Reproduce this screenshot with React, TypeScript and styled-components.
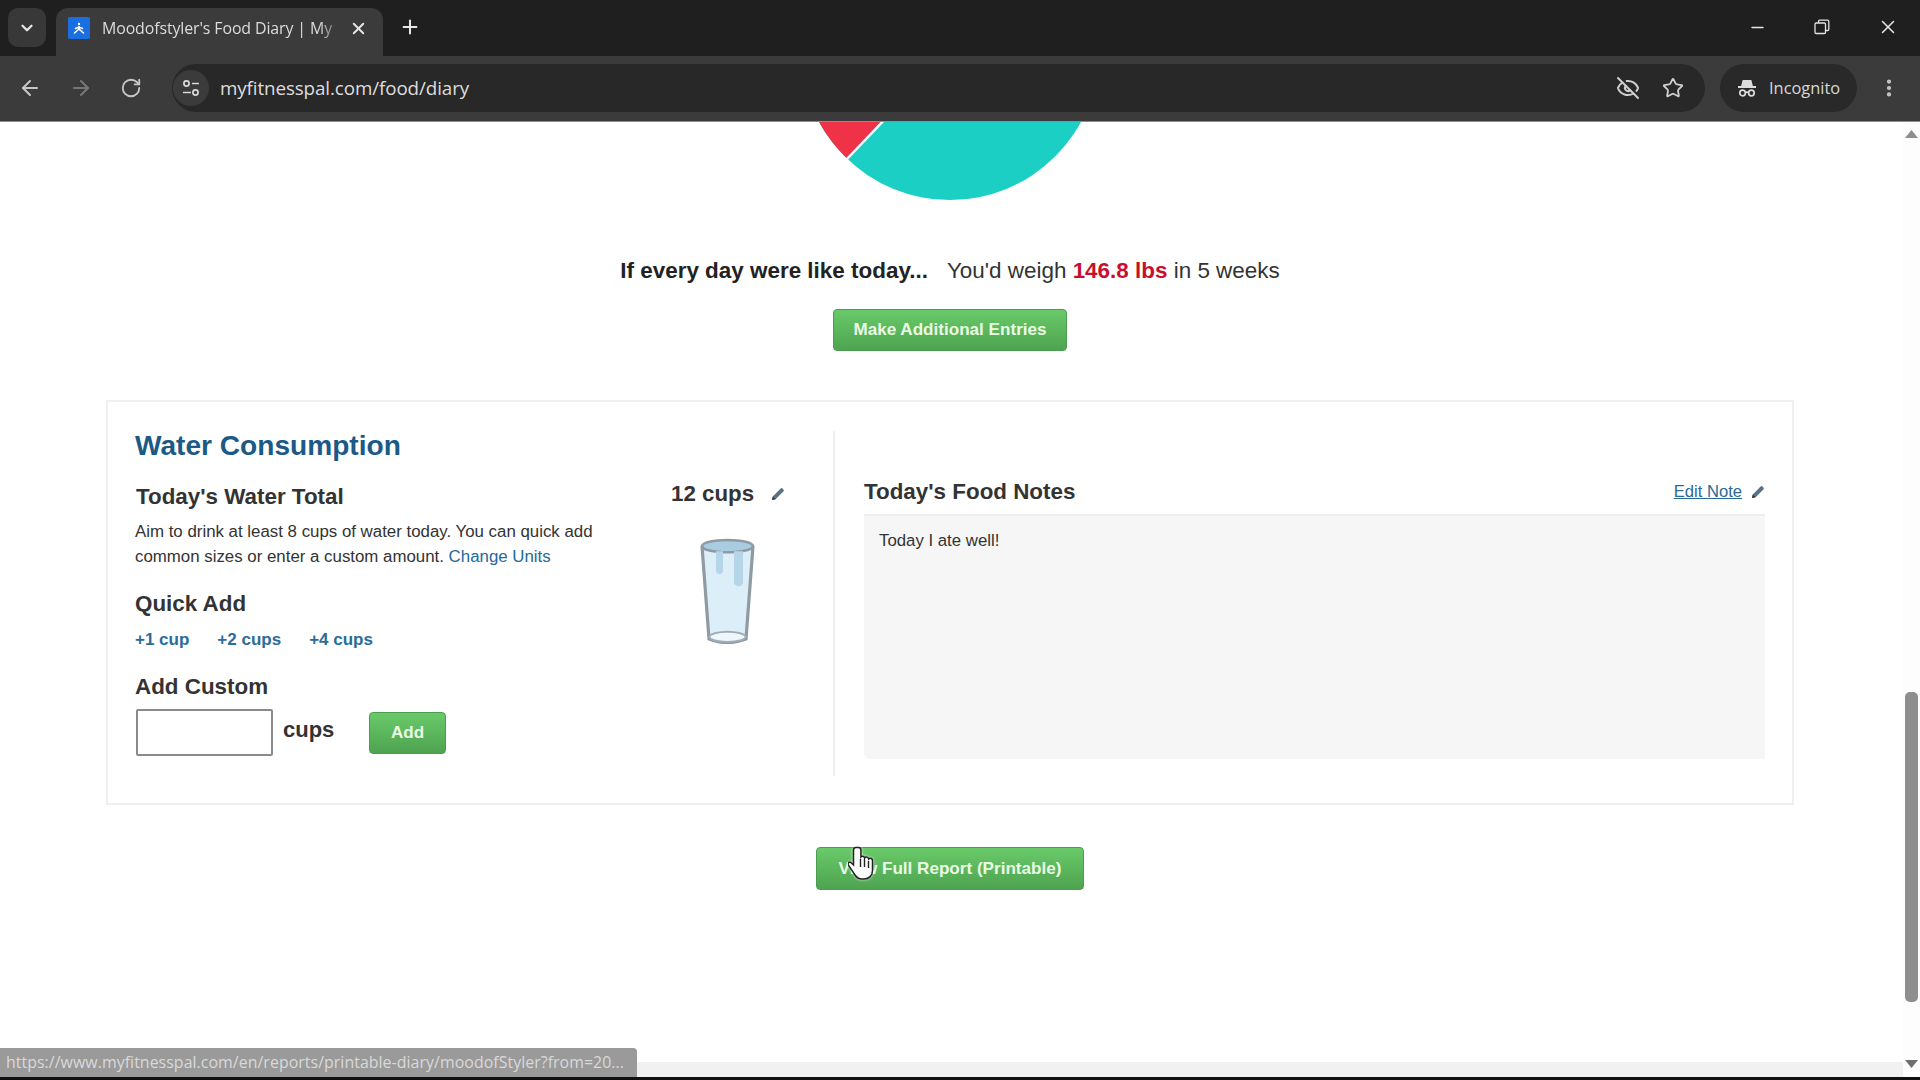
import React from "react";
import styled, { createGlobalStyle } from "styled-components";
import { ArrowLeft, ArrowRight, ChevronDown, EyeOff, Minus, MoreVertical, Plus, RotateCw, Star, X } from "lucide-react";

const Global = createGlobalStyle`
  html, body { margin: 0; padding: 0; background: #fff; overflow: hidden; }
  * { box-sizing: border-box; }
`;

const Screen = styled.div`
  position: relative; width: 1920px; height: 1080px; display: flex; flex-direction: column;
  background: #fff; overflow: hidden; font-family: "Liberation Sans", Arial, sans-serif;
`;
const TabStrip = styled.div`
  height: 56px; flex: none; background: #1f1f1f; display: flex; align-items: flex-start; padding: 8px 0 0 8px; color: #e3e3e3;
`;
const TabMenu = styled.div`
  width: 38px; height: 39px; border-radius: 10px; background: #383838; display: flex; align-items: center; justify-content: center; color: #e8e8e8;
`;
const Tab = styled.div`
  width: 327px; height: 48px; margin-left: 10px; background: #3b3b3b; border-radius: 12px 12px 0 0;
  display: flex; align-items: center; padding: 0 15px 8px 12px;
`;
const Favicon = styled.div`
  width: 22px; height: 22px; border-radius: 2px; background: #1a6fe0; flex: none; display: flex; align-items: center; justify-content: center;
`;
const TabTitle = styled.div`
  flex: 1; margin: 0 6px 0 12px; font-family: "Open Sans", sans-serif; font-size: 15.9px; white-space: nowrap; color: #dcdcdc; letter-spacing: -0.1px;
  -webkit-mask-image: linear-gradient(to right, #000 90%, transparent 100%);
  mask-image: linear-gradient(to right, #000 90%, transparent 100%);
`;
const NewTab = styled.div`
  margin-left: 16px; height: 32px; margin-top: 3px; display: flex; align-items: center; color: #e8e8e8;
`;
const WindowControls = styled.div`
  margin-left: auto; display: flex; align-items: center; height: 38px; padding-right: 21px; gap: 47px; color: #e8e8e8;
`;
const Toolbar = styled.div`
  height: 66px; flex: none; background: #3b3b3b; border-bottom: 1px solid #8e8e8e; display: flex; align-items: center; padding: 0 0 2px 18px; color: #c7c7c7;
`;
const NavGroup = styled.div`
  display: flex; align-items: center; gap: 27px; width: 154px; flex: none;
`;
const Omnibox = styled.div`
  width: 1533px; height: 48px; border-radius: 24px; background: #282828; display: flex; align-items: center; padding-left: 1px; color: #d0d0d0;
`;
const SiteButton = styled.div`
  width: 36px; height: 36px; border-radius: 50%; background: #3b3b3b; display: flex; align-items: center; justify-content: center; flex: none;
`;
const Url = styled.div`
  margin-left: 11px; font-family: "Open Sans", sans-serif; font-size: 18.8px; color: #dedede; letter-spacing: -0.1px;
`;
const OmniIcons = styled.div`
  margin-left: auto; display: flex; align-items: center; gap: 22px; padding-right: 21px;
`;
const IncognitoPill = styled.div`
  width: 137px; height: 48px; margin-left: 15px; border-radius: 24px; background: #292929; display: flex; align-items: center; padding-left: 17px; gap: 12px;
  font-family: "Open Sans", sans-serif; font-size: 16.4px; color: #d8d8d8;
`;
const Menu = styled.div`
  margin-left: 21px; display: flex; color: #c7c7c7;
`;
const Body = styled.div`
  flex: 1; min-height: 0; display: flex; background: #fff;
`;
const LeftPane = styled.div`
  flex: 1; min-width: 0; display: flex; flex-direction: column;
`;
const Page = styled.div`
  flex: 1; min-height: 0; overflow: hidden; padding-left: 106px;
`;
const Container = styled.div`
  width: 1688px; display: flex; flex-direction: column; align-items: center;
`;
const PieChart = styled.svg`
  display: block; width: 300px; height: 78px; flex: none;
`;
const Forecast = styled.div`
  margin-top: 58px; height: 26px; line-height: 26px; font-size: 22.45px; color: #333; white-space: nowrap;
`;
const ForecastLead = styled.strong`
  color: #222; margin-right: 19px;
`;
const Loss = styled.strong`
  color: #c8102e;
`;
const GreenButton = styled.div<{ $w: number; $h: number; $mt?: number }>`
  width: ${(p) => p.$w}px; height: ${(p) => p.$h}px; margin-top: ${(p) => p.$mt ?? 0}px; flex: none;
  display: flex; align-items: center; justify-content: center; border-radius: 4px; border: 1px solid #4c9c4e;
  background: linear-gradient(#69ca69, #4ea350); color: #e9fbe4; font-weight: 700; font-size: 17.1px; white-space: nowrap;
`;
const Card = styled.div`
  width: 100%; height: 405px; margin-top: 49px; flex: none; border: 2px solid #efefef; padding: 29px 27px 27px; display: flex;
`;
const WaterColumn = styled.div`
  width: 700px; flex: none; border-right: 2px solid #eeeeee; padding-right: 0;
`;
const WaterTitle = styled.h2`
  margin: 0; height: 32px; line-height: 30px; font-size: 28.1px; font-weight: 700; color: #1b5a86;
`;
const WaterRow = styled.div`
  display: flex; margin-top: 18px;
`;
const WaterForm = styled.div`
  width: 536px; flex: none; padding-top: 3px;
`;
const Heading = styled.h3<{ $mt?: number; $ml?: number }>`
  margin: ${(p) => p.$mt ?? 0}px 0 0 ${(p) => p.$ml ?? 0}px; height: 26px; line-height: 26px; font-size: 22.4px; font-weight: 700; color: #333;
`;
const Description = styled.p`
  margin: 9px 0 0; width: 490px; font-size: 16.85px; line-height: 25px; color: #333;
`;
const Link = styled.span`
  color: #23699a;
`;
const QuickLinks = styled.div`
  margin-top: 13px; height: 20px; line-height: 20px; display: flex; gap: 28px; font-size: 17px; font-weight: 700; color: #2b6c99;
`;
const CustomRow = styled.div`
  margin-top: 9px; display: flex; align-items: flex-start;
`;
const CupsInput = styled.div`
  width: 137px; height: 47px; margin-left: 1px; border: 2px solid #8a8a8a; border-radius: 2px; background: #fff; flex: none;
`;
const CupsLabel = styled.div`
  margin-left: 10px; width: 86px; line-height: 26px; margin-top: 8px; font-size: 22px; font-weight: 700; color: #333;
`;
const TotalColumn = styled.div`
  display: flex; flex-direction: column;
`;
const TotalValue = styled.div`
  height: 26px; line-height: 26px; display: flex; align-items: center; font-size: 22.3px; font-weight: 700; color: #333; gap: 17px;
`;
const Glass = styled.svg`
  display: block; width: 57px; height: 107px; margin: 31px 0 0 28px;
`;
const NotesColumn = styled.div`
  flex: 1; min-width: 0; padding: 48px 0 0 29px;
`;
const NotesHeader = styled.div`
  height: 35px; display: flex; justify-content: space-between; align-items: flex-start;
`;
const EditNote = styled.div`
  display: flex; align-items: center; height: 26px; gap: 9px; font-size: 16.6px; color: #2a6a94;
`;
const EditText = styled.span`
  text-decoration: underline;
`;
const NotesBox = styled.div`
  height: 245px; background: #f6f6f6; border-top: 2px solid #eeeeee; border-bottom-left-radius: 6px; padding: 15px 15px; font-size: 16.8px; line-height: 20px; color: #333;
`;
const VScroll = styled.div`
  width: 17px; flex: none; display: flex; flex-direction: column; align-items: center; padding-top: 8px; background: #fdfdfd;
`;
const ArrowShape = styled.svg<{ $mt?: number }>`
  display: block; width: 13px; height: 8px; margin-top: ${(p) => p.$mt ?? 0}px; flex: none;
`;
const Thumb = styled.div`
  width: 13px; height: 310px; margin-top: 554px; border-radius: 5px; background: #8e8e8e; flex: none;
`;
const HBar = styled.div`
  height: 15px; flex: none; background: #f1f1f1;
`;
const BottomEdge = styled.div`
  height: 3px; flex: none; background: #111;
`;
const StatusBubble = styled.div`
  position: absolute; left: 0; bottom: 3px; width: 637px; height: 29px; padding: 0 0 0 6px; background: #9a9a9a; border-top-right-radius: 4px;
  line-height: 29px; font-family: "Open Sans", sans-serif; font-size: 15.9px; color: #d9d9d9; white-space: nowrap; letter-spacing: 0.05px;
`;
const HandCursor = styled.svg`
  position: absolute; left: 848px; top: 845px; width: 26px; height: 36px; filter: drop-shadow(0 0 1.5px rgba(255,255,255,.8));
`;

const Pencil = ({ size = 14 }: { size?: number }) => (
  <svg width={size} height={size} viewBox="0 0 14 14">
    <path d="M1 13l.8-3.6L9.600 1.600a1.400 1.400 0 0 1 2 0l.8.8a1.400 1.400 0 0 1 0 2L4.600 12.200z" fill="#5a7186" />
    <path d="M1 13l.8-3.600 2.800 2.800z" fill="#30353a" />
  </svg>
);

const Incognito = () => (
  <svg width="20" height="20" viewBox="0 0 20 20" fill="none" stroke="#dcdcdc" strokeWidth="1.7">
    <path d="M5 8l1.300-5.200h7.400L15 8z" fill="#dcdcdc" />
    <path d="M1 9h18" strokeWidth="2" />
    <circle cx="5.600" cy="15" r="2.800" />
    <circle cx="14.400" cy="15" r="2.800" />
    <path d="M8.400 14.600c1-.6 2.200-.6 3.200 0" />
  </svg>
);

const Tune = () => (
  <svg width="20" height="20" viewBox="0 0 20 20" fill="none" stroke="#d8d8d8" strokeWidth="1.7">
    <circle cx="5.500" cy="5.500" r="2.600" />
    <path d="M11 5.500h7M2 14.500h8" />
    <circle cx="14.500" cy="14.500" r="2.600" />
  </svg>
);

const Restore = () => (
  <svg width="16" height="16" viewBox="0 0 16 16" fill="none" stroke="#e4e4e4" strokeWidth="1.3">
    <rect x="1" y="4" width="10.500" height="10.500" rx="1.200" />
    <path d="M4.500 4V2.400A1.200 1.200 0 0 1 5.700 1.200h7.900a1.200 1.200 0 0 1 1.200 1.200v7.900a1.200 1.200 0 0 1-1.200 1.200h-2" />
  </svg>
);

export default function App() {
  return (
    <Screen>
      <Global />
      <TabStrip>
        <TabMenu><ChevronDown size={18} strokeWidth={3} /></TabMenu>
        <Tab>
          <Favicon>
            <svg width="16" height="16" viewBox="0 0 16 16" fill="none" stroke="#fff" strokeWidth="1.600" strokeLinecap="round">
              <circle cx="8" cy="4" r="1.200" fill="#fff" stroke="none" />
              <path d="M8 6.500V9M8 9l-4.500 4M8 9l4.500 4M4.500 8.500L8 7l3.500 1.500" />
            </svg>
          </Favicon>
          <TabTitle>Moodofstyler's Food Diary | My</TabTitle>
          <X size={19} strokeWidth={2.4} color="#e8e8e8" />
        </Tab>
        <NewTab><Plus size={22} strokeWidth={2.2} /></NewTab>
        <WindowControls>
          <Minus size={19} strokeWidth={1.6} />
          <Restore />
          <X size={22} strokeWidth={1.6} />
        </WindowControls>
      </TabStrip>
      <Toolbar>
        <NavGroup>
          <ArrowLeft size={24} strokeWidth={2} />
          <ArrowRight size={24} strokeWidth={2} color="#777" />
          <RotateCw size={22} strokeWidth={2} />
        </NavGroup>
        <Omnibox>
          <SiteButton><Tune /></SiteButton>
          <Url>myfitnesspal.com/food/diary</Url>
          <OmniIcons>
            <EyeOff size={24} strokeWidth={2} />
            <Star size={22} strokeWidth={2} />
          </OmniIcons>
        </Omnibox>
        <IncognitoPill>
          <Incognito />
          Incognito
        </IncognitoPill>
        <Menu><MoreVertical size={22} strokeWidth={2.6} /></Menu>
      </Toolbar>
      <Body>
        <LeftPane>
          <Page>
            <Container>
              <PieChart viewBox="0 0 300 78">
                <circle cx="150" cy="-71" r="149" fill="#1bcfc5" />
                <path d="M150 -71 L47 36.500 A149 149 0 0 1 1 -71 Z" fill="#ef3248" />
                <path d="M150 -71 L46 38" stroke="#fff" strokeWidth="2.500" />
              </PieChart>
              <Forecast>
                <ForecastLead>If every day were like today...</ForecastLead>
                You'd weigh <Loss>146.8 lbs</Loss> in 5 weeks
              </Forecast>
              <GreenButton $w={234} $h={42} $mt={25}>Make Additional Entries</GreenButton>
              <Card>
                <WaterColumn>
                  <WaterTitle>Water Consumption</WaterTitle>
                  <WaterRow>
                    <WaterForm>
                      <Heading $ml={1}>Today's Water Total</Heading>
                      <Description>
                        Aim to drink at least 8 cups of water today. You can quick add common sizes or enter a custom amount. <Link>Change Units</Link>
                      </Description>
                      <Heading $mt={22}>Quick Add</Heading>
                      <QuickLinks>
                        <span>+1 cup</span>
                        <span>+2 cups</span>
                        <span>+4 cups</span>
                      </QuickLinks>
                      <Heading $mt={24}>Add Custom</Heading>
                      <CustomRow>
                        <CupsInput />
                        <CupsLabel>cups</CupsLabel>
                        <GreenButton $w={77} $h={42} $mt={3}>Add</GreenButton>
                      </CustomRow>
                    </WaterForm>
                    <TotalColumn>
                      <TotalValue>12 cups <Pencil /></TotalValue>
                      <Glass viewBox="0 0 57 105" preserveAspectRatio="none">
                        <path d="M3 8L10 99Q28 106 47 99L54 8Z" fill="#dceff9" />
                        <ellipse cx="28.500" cy="8" rx="25.500" ry="6" fill="#a9cde0" stroke="#8f9aa3" strokeWidth="2.500" />
                        <path d="M17 13h7v20q-3.500 5-7 0zM35 13h9v32q-4 5-9 0z" fill="#b5d6e8" />
                        <path d="M3 8L10 99Q28 106 47 99L54 8" fill="none" stroke="#8f9aa3" strokeWidth="3.200" />
                        <ellipse cx="28.500" cy="97" rx="18" ry="5" fill="#eef7fb" stroke="#a5adb3" strokeWidth="1.800" />
                      </Glass>
                    </TotalColumn>
                  </WaterRow>
                </WaterColumn>
                <NotesColumn>
                  <NotesHeader>
                    <Heading>Today's Food Notes</Heading>
                    <EditNote><EditText>Edit Note</EditText><Pencil /></EditNote>
                  </NotesHeader>
                  <NotesBox>Today I ate well!</NotesBox>
                </NotesColumn>
              </Card>
              <GreenButton $w={268} $h={43} $mt={42}>View Full Report (Printable)</GreenButton>
            </Container>
          </Page>
          <HBar />
        </LeftPane>
        <VScroll>
          <ArrowShape viewBox="0 0 13 8"><path d="M6.500 0L13 8H0z" fill="#8e8e8e" /></ArrowShape>
          <Thumb />
          <ArrowShape viewBox="0 0 13 8" $mt={58}><path d="M0 0h13L6.500 8z" fill="#6e6e6e" /></ArrowShape>
        </VScroll>
      </Body>
      <BottomEdge />
      <StatusBubble>https://www.myfitnesspal.com/en/reports/printable-diary/moodofStyler?from=20...</StatusBubble>
      <HandCursor viewBox="0 0 26 36">
        <path d="M8 2.500c-1.400 0-2.500 1-2.500 2.400V20l-2.300-2.200c-1.100-1-2.400-.8-2.900.2-.4.8-.2 1.600.3 2.300L7 30c1.600 2.400 3.600 4 7 4h2c5 0 8.500-3.500 8.500-8.500V15.500c0-1.300-1-2.300-2.200-2.300-.7 0-1.300.3-1.700.8-.2-1.200-1.100-2-2.200-2-.8 0-1.400.4-1.800 1-.3-1-1.100-1.700-2.100-1.700-.7 0-1.200.2-1.600.7V4.900c0-1.400-1.100-2.400-2.400-2.400z" fill="#fff" stroke="#222" strokeWidth="1.500" />
        <path d="M12.500 14v8M16.500 14v8M20.500 16v7" stroke="#222" strokeWidth="1.400" />
      </HandCursor>
    </Screen>
  );
}
